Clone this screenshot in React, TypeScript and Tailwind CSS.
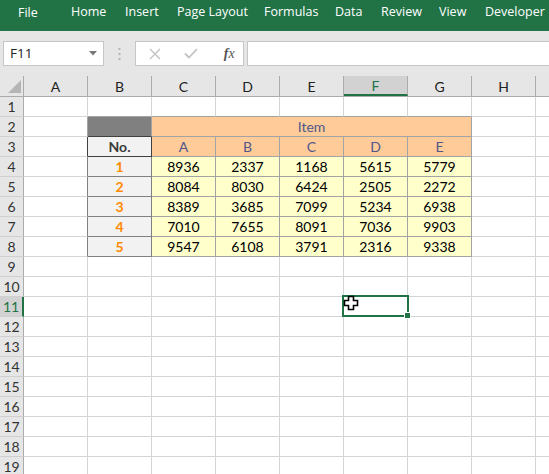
import React from "react";

const GRID = "border-r-[#d4d4d4]";
const GRIDB = "border-b-[#d4d4d4]";

type CellProps = {
  w?: string;
  bg?: string;
  r?: string;
  b?: string;
  cls?: string;
  children?: React.ReactNode;
};

function Cell({ w = "w-[64px]", bg = "bg-white", r = GRID, b = GRIDB, cls = "", children }: CellProps) {
  return (
    <div
      className={`${w} h-[20px] shrink-0 border-r border-b ${r} ${b} ${bg} flex items-center justify-center ${cls}`}
    >
      {children}
    </div>
  );
}

const T = "border-r-[#a3a3a3]";
const TB = "border-b-[#a3a3a3]";
const DK = "border-r-[#404040]";
const DKB = "border-b-[#404040]";
const MD = "border-r-[#808080]";
const MDB = "border-b-[#808080]";

const data = [
  [8936, 2337, 1168, 5615, 5779],
  [8084, 8030, 6424, 2505, 2272],
  [8389, 3685, 7099, 5234, 6938],
  [7010, 7655, 8091, 7036, 9903],
  [9547, 6108, 3791, 2316, 9338],
];

function RowHeader({ n }: { n: number }) {
  const sel = n === 11;
  return (
    <div
      className={`w-[24px] h-[20px] shrink-0 border-b border-b-[#d0d0d0] flex items-center justify-center text-[14px] ${
        sel
          ? "bg-[#d2d2d2] border-r-2 border-r-[#217346] text-[#217346]"
          : "bg-[#e6e6e6] border-r border-r-[#ababab] text-[#333]"
      }`}
    >
      {n}
    </div>
  );
}

function Tail() {
  return <div className="flex-1 h-[20px] border-b border-b-[#d4d4d4] bg-white" />;
}

function PlusCursor() {
  return (
    <svg width="17" height="17" viewBox="0 0 17 17" className="absolute left-[-1px] top-[-2px]">
      <path
        d="M5.5 1.5 H10.5 V5.5 H14.5 V10.5 H10.5 V14.5 H5.5 V10.5 H1.5 V5.5 H5.5 Z"
        fill="white"
        stroke="black"
        strokeWidth="1.6"
      />
    </svg>
  );
}

function SheetRow({ n }: { n: number }) {
  if (n === 1) {
    return (
      <div className="flex">
        <RowHeader n={n} />
        <Cell />
        <Cell b={TB} />
        <Cell b={TB} />
        <Cell b={TB} />
        <Cell b={TB} />
        <Cell b={TB} />
        <Cell b={TB} />
        <Cell />
        <Tail />
      </div>
    );
  }
  if (n === 2) {
    return (
      <div className="flex">
        <RowHeader n={n} />
        <Cell r={T} />
        <Cell bg="bg-[#808080]" r={T} b={DKB} />
        <Cell w="w-[320px]" bg="bg-[#ffcc99]" r={T} b={TB} cls="text-[#4f5689]">
          Item
        </Cell>
        <Cell />
        <Tail />
      </div>
    );
  }
  if (n === 3) {
    return (
      <div className="flex">
        <RowHeader n={n} />
        <Cell r={DK} />
        <Cell bg="bg-[#f2f2f2]" r={DK} b={DKB} cls="font-bold text-[#3a3a3a]">
          No.
        </Cell>
        {["A", "B", "C", "D", "E"].map((l) => (
          <Cell key={l} bg="bg-[#ffcc99]" r={T} b={TB} cls="text-[#4f5689]">
            {l}
          </Cell>
        ))}
        <Cell />
        <Tail />
      </div>
    );
  }
  if (n >= 4 && n <= 8) {
    const row = data[n - 4];
    return (
      <div className="flex">
        <RowHeader n={n} />
        <Cell r={MD} />
        <Cell bg="bg-[#f2f2f2]" r={MD} b={MDB} cls="font-bold text-[#ff8a00]">
          {n - 3}
        </Cell>
        {row.map((v, i) => (
          <Cell key={i} bg="bg-[#ffffcc]" r={T} b={TB} cls="text-black">
            {v}
          </Cell>
        ))}
        <Cell />
        <Tail />
      </div>
    );
  }
  return (
    <div className="flex">
      <RowHeader n={n} />
      {["A", "B", "C", "D", "E", "F", "G", "H"].map((c) =>
        c === "F" && n === 11 ? (
          <div
            key={c}
            className="relative w-[64px] h-[20px] shrink-0 border-r border-b border-r-[#d4d4d4] border-b-[#d4d4d4] bg-white"
          >
            <div className="absolute left-[-2px] top-[-2px] w-[67px] h-[22px] border-2 border-[#217346] z-10" />
            <div className="absolute left-[60px] top-[15px] w-[7px] h-[7px] bg-[#217346] border border-white z-20" />
            <div className="absolute inset-0 z-30">
              <PlusCursor />
            </div>
          </div>
        ) : (
          <Cell key={c} />
        )
      )}
      <Tail />
    </div>
  );
}

export default function App() {
  const tabs: [string, string][] = [
    ["File", "w-[53px]"],
    ["Home", "w-[54px]"],
    ["Insert", "w-[52px]"],
    ["Page Layout", "w-[87px]"],
    ["Formulas", "w-[71px]"],
    ["Data", "w-[46px]"],
    ["Review", "w-[58px]"],
    ["View", "w-[46px]"],
    ["Developer", "w-[64px]"],
  ];
  const cols = ["A", "B", "C", "D", "E", "F", "G", "H"];
  return (
    <div className="w-[549px] h-[474px] overflow-hidden bg-white font-['Lato',sans-serif]">
      {/* Ribbon tabs */}
      <div className="h-[31px] bg-[#217346] flex items-center pl-[18px] pb-[6px] font-['Open_Sans',sans-serif] text-[12.5px] text-white">
        {tabs.map(([t, w]) => (
          <div key={t} className={`${w} shrink-0 whitespace-nowrap ${t === "File" ? "pt-[2px]" : ""}`}>
            {t}
          </div>
        ))}
      </div>
      {/* Formula bar */}
      <div className="h-[45px] bg-[#e6e6e6] flex items-start pt-[10px]">
        <div className="ml-[3px] w-[101px] h-[25px] bg-white border border-[#c6c6c6] flex items-center justify-between pl-[6px] pr-[6px] text-[13.5px] text-[#222] font-['Open_Sans',sans-serif]">
          <span>F11</span>
          <svg width="8" height="5" viewBox="0 0 8 5">
            <path d="M0 0 H8 L4 4.5 Z" fill="#777" />
          </svg>
        </div>
        <div className="w-[31px] h-[25px] flex items-center justify-center">
          <svg width="3" height="12" viewBox="0 0 3 12">
            <rect x="0.5" y="0" width="2" height="2" fill="#b4b4b4" />
            <rect x="0.5" y="5" width="2" height="2" fill="#b4b4b4" />
            <rect x="0.5" y="10" width="2" height="2" fill="#b4b4b4" />
          </svg>
        </div>
        <div className="w-[109px] h-[25px] bg-white border border-[#c6c6c6] flex items-center">
          <div className="w-[36px] flex justify-center pl-[2px]">
            <svg width="12" height="12" viewBox="0 0 12 12">
              <path d="M1 1 L11 11 M11 1 L1 11" stroke="#c2c2c2" strokeWidth="1.4" />
            </svg>
          </div>
          <div className="w-[36px] flex justify-center pl-[4px]">
            <svg width="14" height="11" viewBox="0 0 14 11">
              <path d="M1 5.5 L5 9.5 L13 1" stroke="#c2c2c2" strokeWidth="1.8" fill="none" />
            </svg>
          </div>
          <div className="w-[36px] flex justify-center pl-[8px] font-['Liberation_Serif',serif] italic text-[14px] text-[#555] leading-none">
            <span>
              <span className="font-bold">f</span>x
            </span>
          </div>
        </div>
        <div className="ml-[3px] flex-1 h-[25px] bg-white border border-[#c6c6c6] border-r-0" />
      </div>
      {/* Column headers */}
      <div className="flex h-[21px] bg-[#e6e6e6] border-b border-b-[#ababab]">
        <div className="relative w-[24px] h-[20px] shrink-0 border-r border-r-[#ababab]">
          <svg width="14" height="14" viewBox="0 0 14 14" className="absolute left-[7px] top-[4px]">
            <path d="M14 0 L14 13 L1 13 Z" fill="#b5b5b5" />
          </svg>
        </div>
        {cols.map((c) => (
          <div
            key={c}
            className={`w-[64px] h-[20px] shrink-0 border-r border-r-[#ababab] flex items-center justify-center text-[14px] ${
              c === "F" ? "bg-[#d2d2d2] border-b-2 border-b-[#217346] text-[#217346]" : "text-[#222]"
            }`}
          >
            {c}
          </div>
        ))}
        <div className="flex-1" />
      </div>
      {/* Rows */}
      <div className="text-[14px]">
        {Array.from({ length: 20 }, (_, i) => (
          <SheetRow key={i} n={i + 1} />
        ))}
      </div>
    </div>
  );
}
